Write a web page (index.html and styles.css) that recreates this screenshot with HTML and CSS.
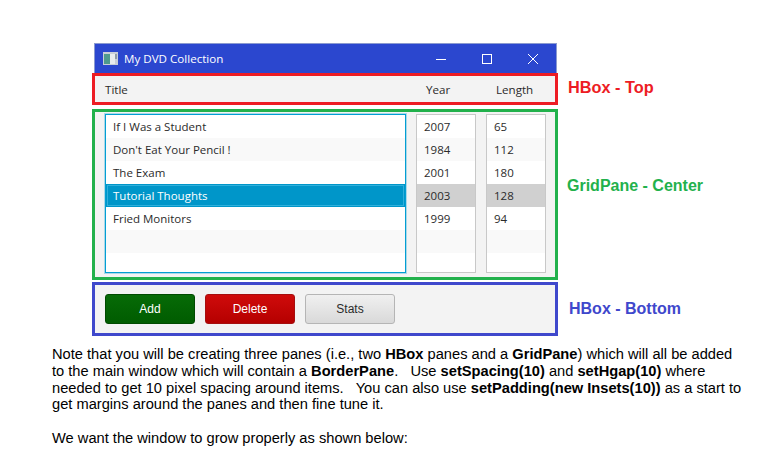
FILE: index.html
```html
<!DOCTYPE html>
<html lang="en">
<head>
<meta charset="utf-8">
<title>My DVD Collection</title>
<link rel="stylesheet" href="styles.css">
</head>
<body>
<div class="figure">
  <div class="titlebar">
    <svg class="app-icon" width="15" height="13" viewBox="0 0 15 13" aria-hidden="true">
      <rect x="0" y="0" width="15" height="13" fill="#c9ced6"/>
      <rect x="1" y="2" width="6" height="10" fill="#4f9a8e"/>
      <rect x="7" y="2" width="5" height="10" fill="#e8ecee"/>
      <rect x="12" y="2" width="2" height="5" fill="#8d9aa8"/>
    </svg>
    <span class="window-title">My DVD Collection</span>
    <div class="controls">
      <svg width="14" height="14" viewBox="0 0 14 14" aria-hidden="true"><path d="M2 7.5H12" stroke="#fff" stroke-width="1" fill="none"/></svg>
      <svg width="14" height="14" viewBox="0 0 14 14" aria-hidden="true"><rect x="2.5" y="2.5" width="9" height="9" stroke="#fff" stroke-width="1" fill="none"/></svg>
      <svg width="14" height="14" viewBox="0 0 14 14" aria-hidden="true"><path d="M2 2L12 12M12 2L2 12" stroke="#fff" stroke-width="1" fill="none"/></svg>
    </div>
  </div>

  <div class="row row-top">
    <div class="pane pane-top">
      <span class="head head-title">Title</span>
      <span class="head head-year">Year</span>
      <span class="head head-length">Length</span>
    </div>
    <span class="label label-top">HBox - Top</span>
  </div>

  <div class="row row-center">
    <div class="pane pane-center">
      <ul class="list list-title">
        <li>If I Was a Student</li>
        <li>Don't Eat Your Pencil !</li>
        <li>The Exam</li>
        <li class="selected">Tutorial Thoughts</li>
        <li>Fried Monitors</li>
        <li></li>
        <li></li>
      </ul>
      <ul class="list list-num">
        <li>2007</li>
        <li>1984</li>
        <li>2001</li>
        <li class="selected-grey">2003</li>
        <li>1999</li>
        <li></li>
        <li></li>
      </ul>
      <ul class="list list-num">
        <li>65</li>
        <li>112</li>
        <li>180</li>
        <li class="selected-grey">128</li>
        <li>94</li>
        <li></li>
        <li></li>
      </ul>
    </div>
    <span class="label label-center">GridPane - Center</span>
  </div>

  <div class="row row-bottom">
    <div class="pane pane-bottom">
      <button class="btn btn-add" type="button">Add</button>
      <button class="btn btn-delete" type="button">Delete</button>
      <button class="btn btn-stats" type="button">Stats</button>
    </div>
    <span class="label label-bottom">HBox - Bottom</span>
  </div>
</div>

<div class="note">
  <p>Note that you will be creating three panes (i.e., two <b>HBox</b> panes and a <b>GridPane</b>) which will all be added<br>
  to the main window which will contain a <b>BorderPane</b>. &nbsp; Use <b>setSpacing(10)</b> and <b>setHgap(10)</b> where<br>
  needed to get 10 pixel spacing around items. &nbsp; You can also use <b>setPadding(new Insets(10))</b> as a start to<br>
  get margins around the panes and then fine tune it.</p>
  <p>We want the window to grow properly as shown below:</p>
</div>
</body>
</html>
```

FILE: styles.css
```css
* { box-sizing: border-box; }

html, body { margin: 0; padding: 0; background: #fff; }

body {
  width: 759px;
  height: 453px;
  overflow: hidden;
  font-family: "Liberation Sans", Arial, sans-serif;
}

.figure {
  padding: 43px 0 0 92px;
}

.titlebar {
  display: flex;
  align-items: center;
  width: 463px;
  height: 30px;
  margin-left: 2px;
  padding-left: 8px;
  background: #2b47cf;
  border: 1px solid #8b9ad0;
  border-bottom: 0;
}

.app-icon { flex: none; }

.window-title {
  margin-left: 6px;
  color: #fff;
  font: 11.6px "Open Sans", "Noto Sans", sans-serif;
}

.controls {
  display: flex;
  align-items: center;
  gap: 32px;
  margin-left: auto;
  padding-right: 16px;
}

.row {
  display: flex;
  align-items: center;
}

.row-top { height: 32px; }
.row-center { height: 171px; margin-top: 4px; }
.row-bottom { height: 54px; margin-top: 2px; }

.pane {
  flex: none;
  width: 466px;
  height: 100%;
  background: #f3f3f3;
  border: 3px solid;
}

.pane-top {
  display: flex;
  align-items: center;
  border-color: #ed1c24;
  color: #2b2b2b;
  font: 11.6px "Open Sans", "Noto Sans", sans-serif;
}

.head-title { margin-left: 10px; width: 321px; }
.head-year { width: 70px; }

.pane-center {
  display: flex;
  gap: 10px;
  padding: 2px 9px 3px 10px;
  border-color: #22b14c;
}

.pane-bottom {
  display: flex;
  align-items: center;
  gap: 10px;
  padding-left: 10px;
  border-color: #3f48cc;
}

.list {
  list-style: none;
  margin: 0;
  padding: 0;
  height: 159px;
  overflow: hidden;
  background: #fff;
  border: 1px solid #c8c8c8;
  color: #2b2b2b;
  font: 11.5px "Open Sans", "Noto Sans", sans-serif;
}

.list-title {
  width: 301px;
  border-color: #039ed3;
  outline: 1px solid rgba(3, 158, 211, 0.3);
}

.list-num { width: 60px; }

.list li {
  height: 23px;
  line-height: 23px;
  padding-left: 7px;
}

.list li:nth-child(even) { background: #f9f9f9; }

.list li.selected {
  background: #0096c9;
  color: #fff;
  box-shadow: inset 0 0 0 1px #0096c9, inset 0 0 0 2px #2fb0dc;
}

.list li.selected-grey { background: #d0d0d0; }

.btn {
  width: 90px;
  height: 30px;
  padding: 0;
  border-radius: 3px;
  font: 12px "Liberation Sans", Arial, sans-serif;
}

.btn-add {
  color: #fff;
  background: linear-gradient(#076b07, #005c00);
  border: 1px solid #004a00;
}

.btn-delete {
  color: #fff;
  background: linear-gradient(#cf0b0b, #b50000);
  border: 1px solid #a50f0f;
}

.btn-stats {
  color: #2b2b2b;
  background: linear-gradient(#f0f0f0, #d9d9d9);
  border: 1px solid #b5b5b5;
}

.label {
  margin-left: 10px;
  font-size: 16px;
  font-weight: bold;
}

.label-top { color: #ed1c24; align-self: flex-start; margin-top: 5px; font-size: 16.3px; }
.label-center { color: #22b14c; align-self: flex-start; margin-top: 68px; margin-left: 9px; }
.label-bottom { color: #3f48cc; margin-left: 11px; }

.note {
  margin: 10px 0 0 52px;
  color: #000;
  font-size: 14.67px;
  line-height: 16.8px;
}

.note p { margin: 0 0 16.8px; white-space: nowrap; }
```
